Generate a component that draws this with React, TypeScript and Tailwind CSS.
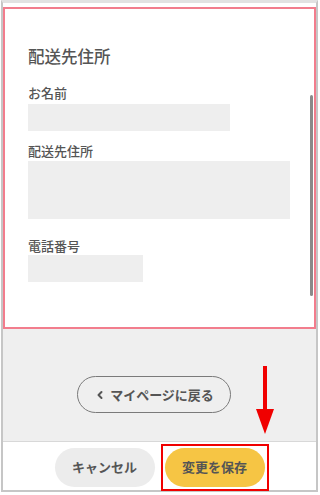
import { ChevronLeft } from "lucide-react";

export default function App() {
  return (
    <div className="h-[495px] w-[320px] bg-white font-['Noto_Sans_CJK_JP','Noto_Sans',sans-serif] text-[#555]">
      <div className="relative ml-[1px] flex h-[492px] w-[317px] flex-col border-x-2 border-b-2 border-t-[3px] border-x-[#c6c6c6] border-b-[#c6c6c6] border-t-[#e2e2e2]">
        {/* form area */}
        <div className="mt-[4px] h-[322px] border-2 border-[#f27d8d] bg-white">
          <div className="relative h-full pl-[23px] pt-[36px]">
            <h2 className="text-[16.5px] font-medium leading-[22px]">配送先住所</h2>

            <p className="mt-[17px] text-[13px] font-medium leading-[18px]">お名前</p>
            <div className="mt-[2px] h-[27px] w-[202px] bg-[#eeeeee]" />

            <p className="mt-[11px] text-[13px] font-medium leading-[18px]">配送先住所</p>
            <div className="mt-[1px] h-[58px] w-[262px] bg-[#eeeeee]" />

            <p className="mt-[18px] text-[13px] font-medium leading-[18px]">電話番号</p>
            <div className="mt-0 h-[27px] w-[115px] bg-[#eeeeee]" />

            <div className="absolute right-[1px] top-[86px] h-[201px] w-[3px] rounded-full bg-[#8a8a8a]" />
          </div>
        </div>

        {/* gray area */}
        <div className="flex flex-1 justify-start bg-[#efefef] pl-[74px] pt-[47px]">
          <button className="flex h-[37px] w-[154px] items-center justify-center gap-[4px] rounded-full border border-[#7a7a7a] text-[13px] font-bold">
            <ChevronLeft size={12} strokeWidth={4} />
            マイページに戻る
          </button>
        </div>

        {/* footer */}
        <div className="flex h-[49px] items-center justify-center gap-[10px] border-t border-[#d8d8d8] bg-white pt-[2px]">
          <button className="h-[39px] w-[100px] rounded-full bg-[#ececec] text-[13px] font-bold">キャンセル</button>
          <button className="h-[39px] w-[100px] rounded-full bg-[#f6c544] text-[13px] font-bold">変更を保存</button>
        </div>

        {/* annotations */}
        <div className="absolute left-[158px] top-[441px] h-[47px] w-[108px] border-2 border-[#f00000]" />
        <div className="absolute left-[253px] top-[363px] flex flex-col items-center">
          <div className="h-[43px] w-[4px] bg-[#f00000]" />
          <div className="h-0 w-0 border-x-[9px] border-t-[25px] border-x-transparent border-t-[#f00000]" />
        </div>
      </div>
    </div>
  );
}
